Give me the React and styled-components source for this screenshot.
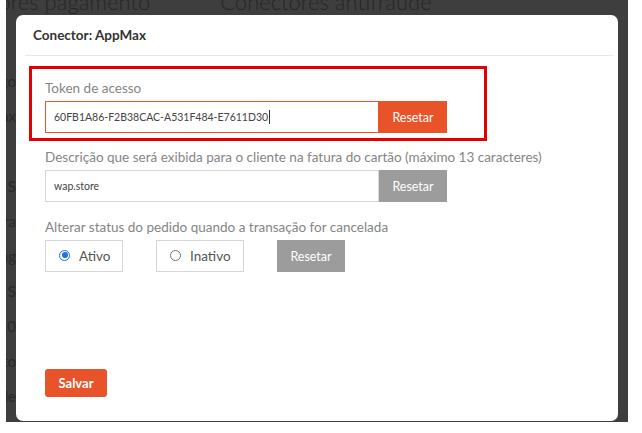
import React from "react";
import styled, { createGlobalStyle } from "styled-components";

const Global = createGlobalStyle`
  html, body { margin: 0; padding: 0; background: #ffffff; }
  body { font-family: "Lato", "Open Sans", sans-serif; }
  * { box-sizing: border-box; }
`;

const Screen = styled.div`
  width: 642px;
  height: 433px;
  padding-left: 6px;
  overflow: hidden;
`;

const Stage = styled.div`
  position: relative;
  width: 622px;
  height: 422px;
  background: #3e3e3e;
  overflow: hidden;
`;

const Behind = styled.div`
  display: flex;
  flex-direction: column;
  height: 100%;
`;

const Tabs = styled.div`
  display: flex;
  gap: 70px;
  margin-top: -12px;
  height: 28px;
`;

const TabTitle = styled.span`
  font-family: "Lato", sans-serif;
  font-size: 22px;
  font-weight: 300;
  color: #262626;
  white-space: nowrap;
  margin-left: ${(p) => p.$offset || 0}px;
`;

const SideList = styled.div`
  display: flex;
  flex-direction: column;
  width: 10px;
  overflow: hidden;
  margin-top: 57px;
`;

const SideItem = styled.div`
  height: 36px;
  font-size: 15px;
  color: #2a2a2a;
  white-space: nowrap;
  direction: rtl;
  text-align: left;
  width: 10px;
  overflow: hidden;
`;

const Modal = styled.div`
  position: absolute;
  left: 10px;
  top: 15px;
  width: 602px;
  height: 406px;
  background: #ffffff;
  border-radius: 7px;
  display: flex;
  flex-direction: column;
`;

const Header = styled.div`
  margin: 0 5px 0 9px;
  height: 41px;
  display: flex;
  align-items: center;
  padding-left: 8px;
  border-bottom: 1px solid #e8e8e8;
`;

const Title = styled.h4`
  margin: 0;
  font-size: 13.5px;
  font-weight: 700;
  color: #333333;
`;

const Body = styled.div`
  flex: 1;
  display: flex;
  flex-direction: column;
  padding: 10px 0 0 13px;
`;

const Highlight = styled.div`
  width: 458px;
  border: 3px solid #e30000;
  padding: 11px 0 5px 13px;
`;

const Field = styled.div`
  display: flex;
  flex-direction: column;
  padding-left: ${(p) => (p.$inset ? 16 : 0)}px;
  margin-top: ${(p) => p.$top || 0}px;
`;

const Label = styled.label`
  font-size: 13.5px;
  color: #858585;
  line-height: 16px;
  margin-bottom: 5px;
  white-space: nowrap;
`;

const Row = styled.div`
  display: flex;
  align-items: stretch;
  height: 32px;
`;

const Input = styled.div`
  width: 334px;
  height: 32px;
  border: 1px solid ${(p) => (p.$focus ? "#e9542b" : "#d6d6d6")};
  display: flex;
  align-items: center;
  padding-left: 8px;
  font-size: 10.5px;
  color: #444444;
`;

const Caret = styled.span`
  display: inline-block;
  width: 1px;
  height: 14px;
  background: #333;
  margin-left: 1px;
`;

const ResetButton = styled.button`
  width: 68px;
  height: 32px;
  border: none;
  background: ${(p) => (p.$active ? "#e9532a" : "#9c9c9c")};
  color: #ffffff;
  font-family: inherit;
  font-size: 12.5px;
  padding: 0;
  cursor: pointer;
`;

const RadioBox = styled.label`
  width: ${(p) => p.$w}px;
  height: 32px;
  border: 1px solid #d6d6d6;
  display: flex;
  align-items: center;
  padding-left: 13px;
  gap: 9px;
  font-size: 13.5px;
  color: #555555;
  margin-right: ${(p) => p.$mr || 0}px;
`;

const RadioDot = styled.span`
  width: 11px;
  height: 11px;
  border-radius: 50%;
  border: 1px solid ${(p) => (p.$on ? "#1a73e8" : "#777777")};
  display: flex;
  align-items: center;
  justify-content: center;
  margin-top: -2px;
  &::after {
    content: "";
    width: 6px;
    height: 6px;
    border-radius: 50%;
    background: ${(p) => (p.$on ? "#1a73e8" : "transparent")};
  }
`;

const Footer = styled.div`
  margin-top: auto;
  padding: 0 0 24px 29px;
`;

const SaveButton = styled.button`
  width: 62px;
  height: 28px;
  border: none;
  border-radius: 3px;
  background: #e9532a;
  color: #ffffff;
  font-family: inherit;
  font-size: 13px;
  font-weight: 700;
  padding: 0;
`;

const sideItems = ["Código", "Appmax", "", "Pago S", "Bandeira", "Pag", "Total S", "v3.0", "Pagamento", "Fatura de"];

export default function App() {
  return (
    <>
      <Global />
      <Screen>
        <Stage>
          <Behind>
            <Tabs>
              <TabTitle $offset={-76}>Conectores pagamento</TabTitle>
              <TabTitle>Conectores antifraude</TabTitle>
            </Tabs>
            <SideList>
              {sideItems.map((t, i) => (
                <SideItem key={i}>{t}</SideItem>
              ))}
            </SideList>
          </Behind>
          <Modal>
            <Header>
              <Title>Conector: AppMax</Title>
            </Header>
            <Body>
              <Highlight>
                <Field>
                  <Label>Token de acesso</Label>
                  <Row>
                    <Input $focus>
                      60FB1A86-F2B38CAC-A531F484-E7611D30
                      <Caret />
                    </Input>
                    <ResetButton $active>Resetar</ResetButton>
                  </Row>
                </Field>
              </Highlight>
              <Field $inset $top={8}>
                <Label>Descrição que será exibida para o cliente na fatura do cartão (máximo 13 caracteres)</Label>
                <Row>
                  <Input>wap.store</Input>
                  <ResetButton>Resetar</ResetButton>
                </Row>
              </Field>
              <Field $inset $top={17}>
                <Label>Alterar status do pedido quando a transação for cancelada</Label>
                <Row>
                  <RadioBox $w={78} $mr={33}>
                    <RadioDot $on />
                    Ativo
                  </RadioBox>
                  <RadioBox $w={88} $mr={33}>
                    <RadioDot />
                    Inativo
                  </RadioBox>
                  <ResetButton>Resetar</ResetButton>
                </Row>
              </Field>
            </Body>
            <Footer>
              <SaveButton>Salvar</SaveButton>
            </Footer>
          </Modal>
        </Stage>
      </Screen>
    </>
  );
}
